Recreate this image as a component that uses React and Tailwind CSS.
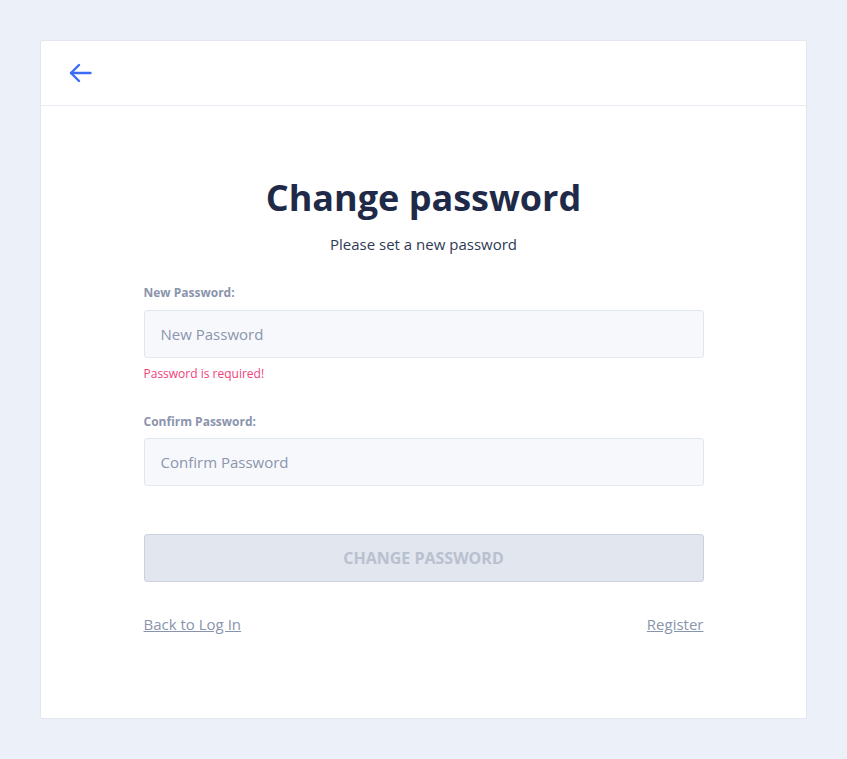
export default function App() {
    return (
        <div className="min-h-[759px] bg-[#ecf0f8] pt-10 pb-[41px] pl-10 pr-10 font-['Open_Sans',sans-serif]">
            <div className="bg-white border border-[#e3e7f0] rounded-[2px]">
                {/* Header */}
                <div className="h-[65px] border-b border-[#e8ebf2] flex items-center pl-[28px]">
                    <button className="text-[#3b6cf6]">
                        <svg width="23" height="20" viewBox="0 0 23 20" fill="none" stroke="currentColor" strokeWidth="2.4" strokeLinecap="round" strokeLinejoin="round">
                            <path d="M21.5 10H2" />
                            <path d="M10 2L2 10l8 8" />
                        </svg>
                    </button>
                </div>

                {/* Body */}
                <div className="w-[560px] mx-auto pt-[68px] pb-[84px]">
                    <h1 className="text-center text-[36px] leading-[48px] font-bold text-[#1f2a48]">Change password</h1>
                    <p className="text-center text-[15px] leading-5 text-[#2f3a55] mt-[12px]">Please set a new password</p>

                    <form className="mt-[31px]">
                        <label className="block text-[12px] leading-4 font-bold text-[#8a94ad]">New Password:</label>
                        <input
                            type="password"
                            placeholder="New Password"
                            className="mt-[9px] w-full h-[48px] px-4 text-[15px] bg-[#f7f8fc] border border-[#e2e6ef] rounded-[3px] outline-none placeholder:text-[#8b95ad]"
                        />
                        <p className="mt-[8px] text-[12px] leading-4 text-[#f2417a]">Password is required!</p>

                        <label className="block mt-[32px] text-[12px] leading-4 font-bold text-[#8a94ad]">Confirm Password:</label>
                        <input
                            type="password"
                            placeholder="Confirm Password"
                            className="mt-[8px] w-full h-[48px] px-4 text-[15px] bg-[#f7f8fc] border border-[#e2e6ef] rounded-[3px] outline-none placeholder:text-[#8b95ad]"
                        />

                        <button
                            type="submit"
                            disabled
                            className="mt-[48px] w-full h-[48px] bg-[#e2e6ee] border border-[#ccd2dd] rounded-[3px] text-[16px] font-bold uppercase text-[#b9c0cf]"
                        >
                            Change Password
                        </button>
                    </form>

                    <div className="mt-[32px] flex justify-between text-[15px] leading-5 text-[#8a94ad]">
                        <a href="#" className="underline">Back to Log In</a>
                        <a href="#" className="underline">Register</a>
                    </div>
                </div>
            </div>
        </div>
    );
}
